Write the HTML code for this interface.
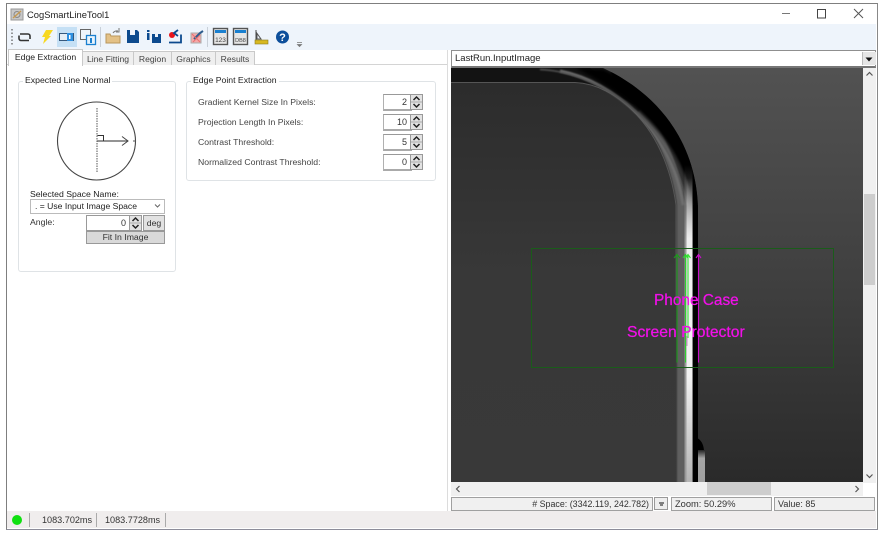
<!DOCTYPE html>
<html><head><meta charset="utf-8">
<style>
html,body{margin:0;padding:0;background:#fff;width:881px;height:533px;overflow:hidden}
body{font-family:"Liberation Sans",sans-serif;font-size:8.7px;color:#333;position:relative}
.a{position:absolute;white-space:nowrap}
.tab{position:absolute;top:51px;height:13px;background:#efefef;border:1px solid #c9c9c9;border-bottom:none;text-align:center;line-height:14px;font-size:8.6px;color:#444}
.fs{position:absolute;border:1px solid #dfe3e6;border-radius:3px;background:#fff}
.num{position:absolute;left:383px;width:23px;height:14px;border:1px solid #b0b0b0;border-top-color:#999;border-bottom:2px solid #aaa;background:#fff;text-align:right;font-size:9px;line-height:14px;padding-right:4px;box-sizing:content-box}
.spin{position:absolute;width:13px;height:16px;background:#e2e2e2;border:1px solid #999;box-sizing:border-box}
.spin svg{display:block}
.sb{position:absolute;background:#f0f0f0;border:1px solid #a0a0a0;box-sizing:border-box;height:14px;line-height:13px;font-size:9.300px;color:#333}
</style></head>
<body>
<!-- window frame -->
<div class="a" style="left:6px;top:3px;width:870px;height:525px;border:1px solid #7f7f7f;border-bottom:1px solid #8d8d9a;border-right:1px solid #888;background:#fff"></div>

<!-- title bar -->
<svg class="a" style="left:10px;top:8px" width="14" height="13"><rect x="1" y="1" width="12" height="11" fill="#c8c8c8" stroke="#999"/><circle cx="7" cy="6.500" r="3" fill="none" stroke="#888"/><path d="M3 10L11 3" stroke="#c79a50" stroke-width="1.400"/></svg>
<div class="a" style="left:27px;top:9px;font-size:9.400px;color:#222">CogSmartLineTool1</div>
<svg class="a" style="left:780px;top:4px" width="96" height="20" fill="none" stroke="#444"><path d="M2 9.500H10" stroke="#777"/><rect x="37.500" y="5.500" width="8" height="8.500"/><path d="M74 5L83 14M83 5L74 14" stroke="#555"/></svg>

<!-- toolbar -->
<div class="a" style="left:7px;top:24px;width:869px;height:26px;background:#eef4fb"></div>
<svg class="a" style="left:7px;top:24px" width="310" height="26">
 <path d="M5 5V22" stroke="#777" stroke-dasharray="1.500 2" stroke-width="1.500"/>
 <rect x="50" y="3" width="20" height="20" fill="#c5e0f5"/>
 <g fill="none" stroke="#333" stroke-width="1.600"><path d="M13 10h8a2 2 0 0 1 2 2v3M22 16.500h-8a2 2 0 0 1-2-2v-3"/></g>
 <path d="M39 6h7l-4 6h2l-8 8 2-7h-3z" fill="#f7d820"/>
 <rect x="52.500" y="9.500" width="14" height="7" fill="#e4eef6" stroke="#36587c"/><rect x="60" y="9" width="6" height="8" fill="#2d8fe0"/><rect x="62" y="11" width="1.500" height="4" fill="#fff"/>
 <rect x="73.500" y="5.500" width="10" height="10" fill="#eef4fb" stroke="#666"/><rect x="79.500" y="11.500" width="9" height="9" fill="#e8f3fc" stroke="#1a80d0" stroke-width="1.300"/><rect x="83" y="14" width="2" height="5" fill="#1a80d0"/>
 <path d="M93.500 3V23" stroke="#c9d0d8"/>
 <path d="M99 10h4l1 2h9v7h-14z" fill="#e3c187" stroke="#b8965c"/><path d="M106 9a5 5 0 0 1 5-2M112 4v4h-3" fill="none" stroke="#777"/>
 <path d="M120 6h10l2 2v11h-12z" fill="#0c4a8e"/><rect x="123" y="6" width="5" height="5" fill="#eef4fb"/>
 <rect x="140" y="9" width="2.500" height="7" fill="#0c4a8e"/><rect x="140" y="6" width="2.500" height="2" fill="#0c4a8e"/><path d="M145 10h9v9h-9z" fill="#0c4a8e"/><rect x="148" y="10" width="3" height="3" fill="#eef4fb"/>
 <circle cx="165" cy="11" r="3" fill="#e8141c"/><path d="M162 18.500h12v-8M171 6l-4 3 4 3" fill="none" stroke="#0c4a8e" stroke-width="1.800"/>
 <rect x="184" y="9" width="10" height="10" fill="#f4a8a8" stroke="#aaa"/><path d="M187 15l6-6 3-2" stroke="#2d5d8e" stroke-width="2" fill="none"/><path d="M185 10l8 8M193 11l-7 7" stroke="#e87070"/>
 <path d="M200.500 3V23" stroke="#c9d0d8"/>
 <g><rect x="206.500" y="4.500" width="14" height="16" fill="#e6e6e6" stroke="#555" stroke-width="1.400"/><rect x="208" y="6" width="11" height="3" fill="#1a80d0"/><text x="213.500" y="18" font-size="6.500" text-anchor="middle" fill="#444" font-family="Liberation Sans">123</text></g>
 <g><rect x="226.500" y="4.500" width="14" height="16" fill="#e6e6e6" stroke="#555" stroke-width="1.400"/><rect x="228" y="6" width="11" height="3" fill="#1a80d0"/><text x="233.500" y="18" font-size="5.500" text-anchor="middle" fill="#444" font-family="Liberation Sans">DB8</text></g>
 <path d="M249 8l5 7h-4v-4z" fill="none" stroke="#555"/><path d="M249 6v10" stroke="#444"/><rect x="248" y="16" width="13" height="4" fill="#d8b820" stroke="#8a7a20" stroke-width=".6"/>
 <circle cx="275.500" cy="13" r="6.500" fill="#0d4f9b"/><text x="275.500" y="17" font-size="11" font-weight="bold" text-anchor="middle" fill="#fff" font-family="Liberation Sans">?</text>
 <path d="M290 18.500h5M290.500 20.500h4l-2 2z" stroke="#777" stroke-width=".8" fill="#777"/>
</svg>

<!-- left panel tabs -->
<div class="a" style="left:7px;top:50px;width:441px;height:461px;background:#fff"></div>
<div class="a" style="left:7px;top:64px;width:441px;height:1px;background:#d4d4d4"></div>
<div class="a" style="left:447px;top:50px;width:1px;height:461px;background:#dcdcdc"></div>
<div class="tab" style="left:82px;width:50px">Line Fitting</div>
<div class="tab" style="left:133px;width:37px">Region</div>
<div class="tab" style="left:171px;width:43px">Graphics</div>
<div class="tab" style="left:215px;width:38px">Results</div>
<div class="tab" style="left:8px;top:49px;width:73px;height:16px;background:#fff;line-height:15px;color:#222;font-size:8.700px">Edge Extraction</div>

<!-- Expected Line Normal -->
<div class="fs" style="left:18px;top:81px;width:156px;height:189px"></div>
<div class="a" style="left:23px;top:75px;background:#fff;padding:0 2px;color:#222">Expected Line Normal</div>
<svg class="a" style="left:50px;top:100px" width="92" height="84" fill="none">
 <circle cx="46.500" cy="41" r="39" stroke="#444" stroke-width="1.100"/>
 <path d="M47 8V73" stroke="#555" stroke-dasharray="1.500 1"/>
 <path d="M47 41H78" stroke="#555" stroke-width="1.200"/>
 <path d="M83 41H86" stroke="#555"/>
 <path d="M72 36.500L78 41 72 45.500" stroke="#444"/>
 <path d="M47.500 35.500H53.500V41" stroke="#333"/>
</svg>
<div class="a" style="left:30px;top:189px;color:#222">Selected Space Name:</div>
<div class="a" style="left:30px;top:199px;width:133px;height:13px;border:1px solid #bbb;background:#fff;line-height:13px;text-indent:4px;color:#222;font-size:8.600px">. = Use Input Image Space</div>
<svg class="a" style="left:154px;top:203px" width="7" height="6"><path d="M1 1.500L3.500 4 6 1.500" fill="none" stroke="#666"/></svg>
<div class="a" style="left:30px;top:217px">Angle:</div>
<div class="a" style="left:86px;top:215px;width:42px;height:14px;border:1px solid #999;background:#fff;text-align:right;line-height:14px;font-size:9px"><span style="padding-right:3px">0</span></div>
<div class="spin" style="left:129px;top:215px;width:13px;height:16px"><svg width="11" height="14" viewBox="0 0 11 14"><path d="M0 7H11" stroke="#aaa"/><path d="M2.500 5L5.500 2 8.500 5M2.500 9L5.500 12 8.500 9" fill="none" stroke="#222" stroke-width="1.500"/></svg></div>
<div class="a" style="left:143px;top:215px;width:20px;height:14px;background:#e2e2e2;border:1px solid #999;text-align:center;line-height:14px">deg</div>
<div class="a" style="left:86px;top:231px;width:77px;height:11px;background:#d9d9d9;border:1px solid #999;text-align:center;line-height:11px">Fit In Image</div>

<!-- Edge Point Extraction -->
<div class="fs" style="left:186px;top:81px;width:248px;height:98px"></div>
<div class="a" style="left:191px;top:75px;background:#fff;padding:0 2px;color:#222">Edge Point Extraction</div>
<div class="a" style="left:198px;top:97px;color:#444">Gradient Kernel Size In Pixels:</div>
<div class="a" style="left:198px;top:117px;color:#444">Projection Length In Pixels:</div>
<div class="a" style="left:198px;top:137px;color:#444">Contrast Threshold:</div>
<div class="a" style="left:198px;top:157px;color:#444">Normalized Contrast Threshold:</div>

<div class="num" style="top:94px">2</div>
<div class="num" style="top:114px">10</div>
<div class="num" style="top:134px">5</div>
<div class="num" style="top:154px">0</div>
<div class="spin" style="left:410px;top:94px"><svg width="11" height="14" viewBox="0 0 11 14"><path d="M0 7H11" stroke="#aaa"/><path d="M2.500 5L5.500 2 8.500 5M2.500 9L5.500 12 8.500 9" fill="none" stroke="#222" stroke-width="1.500"/></svg></div>
<div class="spin" style="left:410px;top:114px"><svg width="11" height="14" viewBox="0 0 11 14"><path d="M0 7H11" stroke="#aaa"/><path d="M2.500 5L5.500 2 8.500 5M2.500 9L5.500 12 8.500 9" fill="none" stroke="#222" stroke-width="1.500"/></svg></div>
<div class="spin" style="left:410px;top:134px"><svg width="11" height="14" viewBox="0 0 11 14"><path d="M0 7H11" stroke="#aaa"/><path d="M2.500 5L5.500 2 8.500 5M2.500 9L5.500 12 8.500 9" fill="none" stroke="#222" stroke-width="1.500"/></svg></div>
<div class="spin" style="left:410px;top:154px"><svg width="11" height="14" viewBox="0 0 11 14"><path d="M0 7H11" stroke="#aaa"/><path d="M2.500 5L5.500 2 8.500 5M2.500 9L5.500 12 8.500 9" fill="none" stroke="#222" stroke-width="1.500"/></svg></div>

<!-- right panel -->
<div class="a" style="left:448px;top:50px;width:428px;height:461px;background:#fff"></div>
<div class="a" style="left:451px;top:50px;width:423px;height:15px;border:1px solid #8f8f8f;border-bottom:2px solid #777;background:#fff;line-height:16px;text-indent:3px;font-size:9.500px;color:#222">LastRun.InputImage</div>
<div class="a" style="left:862px;top:52px;width:13px;height:13px;background:#e6e6e6;border-left:1px solid #bbb"></div>
<svg class="a" style="left:865px;top:57px" width="8" height="5"><path d="M0.500 0.500H7.500L4 4.500z" fill="#111"/></svg>

<!-- image -->
<svg class="a" style="left:451px;top:68px" width="412" height="415" viewBox="451 68 412 415">
 <defs>
  <linearGradient id="bg" x1="0" y1="0" x2="0" y2="1"><stop offset="0" stop-color="#525252"/><stop offset=".5" stop-color="#404040"/><stop offset="1" stop-color="#2a2a2a"/></linearGradient>
  <linearGradient id="inner" x1="0" y1="0" x2="0" y2="1"><stop offset="0" stop-color="#2b2b2b"/><stop offset=".5" stop-color="#383838"/><stop offset="1" stop-color="#393939"/></linearGradient>
  <linearGradient id="bright" gradientUnits="userSpaceOnUse" x1="0" y1="178" x2="0" y2="483"><stop offset="0" stop-color="#eee" stop-opacity="0"/><stop offset=".2" stop-color="#eee" stop-opacity="1"/><stop offset=".65" stop-color="#f2f2f2" stop-opacity="1"/><stop offset="1" stop-color="#b4b4b4" stop-opacity="1"/></linearGradient>
  <linearGradient id="gray" gradientUnits="userSpaceOnUse" x1="0" y1="165" x2="0" y2="240"><stop offset="0" stop-color="#9a9a9a" stop-opacity="0"/><stop offset="1" stop-color="#9a9a9a" stop-opacity="1"/></linearGradient>
  <linearGradient id="btn" x1="0" y1="0" x2="0" y2="1"><stop offset="0" stop-color="#222"/><stop offset=".25" stop-color="#a4a4a4"/><stop offset="1" stop-color="#a0a0a0"/></linearGradient>
  <clipPath id="ph"><path d="M451 68H603C655 92 697 140 698 210V483H451Z"/></clipPath>
  <filter id="b3" x="-20%" y="-20%" width="140%" height="140%"><feGaussianBlur stdDeviation="1.800"/></filter>
  <filter id="b1" x="-50%" y="-20%" width="200%" height="140%"><feGaussianBlur stdDeviation=".8"/></filter>
 </defs>
 <rect x="451" y="68" width="412" height="415" fill="url(#bg)"/>
 <g clip-path="url(#ph)">
  <rect x="451" y="68" width="260" height="415" fill="url(#inner)"/>
  <!-- top strip -->
  <path d="M451 68H590L660 125 640 108C610 90 590 83 570 82.500H451Z" fill="#131313"/>
  <path d="M451 82.500H575C615 84 665 125 676 205V300" fill="none" stroke="#555" stroke-width="1"/>
  <path d="M640 110C660 130 677 170 681 205V483" fill="none" stroke="#5e5e5e" stroke-width="8" filter="url(#b1)"/>
  <path d="M560 71C615 82 672 130 683 205" fill="none" stroke="#6e6e6e" stroke-width="3" filter="url(#b1)"/>
  <path d="M540 69.500C600 72 670 120 687 205" fill="none" stroke="#555" stroke-width="1.500" filter="url(#b1)"/>
  <!-- black edge, wide at the curve, narrow on the straight -->
  <path d="M603 68C655 92 697 140 698 210V483H693V210C688 150 640 102 575 68Z" fill="#000" filter="url(#b3)"/>
  <path d="M610 68C660 92 698 140 699 210V483H693.500V210C690 160 655 115 615 88Z" fill="#000" filter="url(#b1)"/>
  <!-- bright strip -->
  <rect x="684.500" y="165" width="8" height="318" fill="url(#gray)"/>
  <rect x="686.500" y="178" width="6" height="305" fill="url(#bright)"/>
  <rect x="693" y="205" width="6" height="278" fill="#000"/>
 </g>
 <!-- button -->
 <path d="M693 438.500H698C702 441 704 446 704 452H698V483H693Z" fill="#000"/>
 <rect x="698" y="450" width="7" height="33" fill="url(#btn)"/>
 <!-- region -->
 <rect x="531.500" y="248.500" width="302" height="119" fill="none" stroke="#1a5c1a"/>
 <!-- arrows -->
 <g fill="none" stroke-width="1.100">
  <path d="M677 362.500V255M674 258L677 254.500 680 258" stroke="#1a9a1a"/>
  <path d="M685.500 362.500V255M683 258L685.500 254.500 688 258" stroke="#2fd02f"/>
  <path d="M688 338V255M685.500 258L688 254.500 690.500 258" stroke="#35e635"/>
  <path d="M698.500 362.500V255M696 258L698.500 254.500 701 258" stroke="#c810c8"/>
  <path d="M687 346V336" stroke="#c898c8"/>
 </g>
 <text x="654" y="305" font-size="15.400" fill="#f010e8" stroke="#f010e8" stroke-width=".25" font-family="Liberation Sans">Phone Case</text>
 <text x="627" y="337" font-size="15.700" fill="#f010e8" stroke="#f010e8" stroke-width=".25" font-family="Liberation Sans">Screen Protector</text>
</svg>

<!-- scrollbars -->
<div class="a" style="left:863px;top:68px;width:13px;height:415px;background:#f0f0f0"></div>
<div class="a" style="left:864px;top:194px;width:11px;height:91px;background:#cdcdcd"></div>
<svg class="a" style="left:863px;top:70px" width="13" height="8"><path d="M3.500 5.500L6.500 2.500 9.500 5.500" fill="none" stroke="#555" stroke-width="1.200"/></svg>
<svg class="a" style="left:863px;top:472px" width="13" height="8"><path d="M3.500 2.500L6.500 5.500 9.500 2.500" fill="none" stroke="#555" stroke-width="1.200"/></svg>
<div class="a" style="left:451px;top:482px;width:412px;height:14px;background:#f0f0f0"></div>
<div class="a" style="left:707px;top:482px;width:64px;height:13px;background:#cdcdcd"></div>
<svg class="a" style="left:454px;top:484px" width="8" height="10"><path d="M5.500 2L2.500 5 5.500 8" fill="none" stroke="#555" stroke-width="1.200"/></svg>
<svg class="a" style="left:853px;top:484px" width="8" height="10"><path d="M2.500 2L5.500 5 2.500 8" fill="none" stroke="#555" stroke-width="1.200"/></svg>

<!-- image status -->
<div class="sb" style="left:451px;top:497px;width:202px;text-align:right;padding-right:3px;font-size:8.900px">&#35; Space: (3342.119, 242.782)</div>
<div class="a" style="left:654px;top:497px;width:14px;height:13px;background:#eee;border:1px solid #999;box-sizing:border-box"></div>
<svg class="a" style="left:658px;top:502px" width="7" height="5"><path d="M1 1H6M2 3H5" stroke="#111"/></svg>
<div class="sb" style="left:671px;top:497px;width:101px;padding-left:3px">Zoom: 50.29%</div>
<div class="sb" style="left:774px;top:497px;width:101px;padding-left:3px;font-size:9px">Value: 85</div>

<!-- bottom status -->
<div class="a" style="left:7px;top:511px;width:869px;height:17px;background:#f0eded"></div>
<div class="a" style="left:12px;top:515px;width:10px;height:10px;border-radius:50%;background:#10e010"></div>
<div class="a" style="left:29px;top:513px;width:1px;height:14px;background:#aaa"></div>
<div class="a" style="left:42px;top:515px;color:#333;font-size:9.100px">1083.702ms</div>
<div class="a" style="left:96px;top:513px;width:1px;height:14px;background:#aaa"></div>
<div class="a" style="left:105px;top:515px;color:#333;font-size:9.100px">1083.7728ms</div>
<div class="a" style="left:165px;top:513px;width:1px;height:14px;background:#aaa"></div>
</body></html>
